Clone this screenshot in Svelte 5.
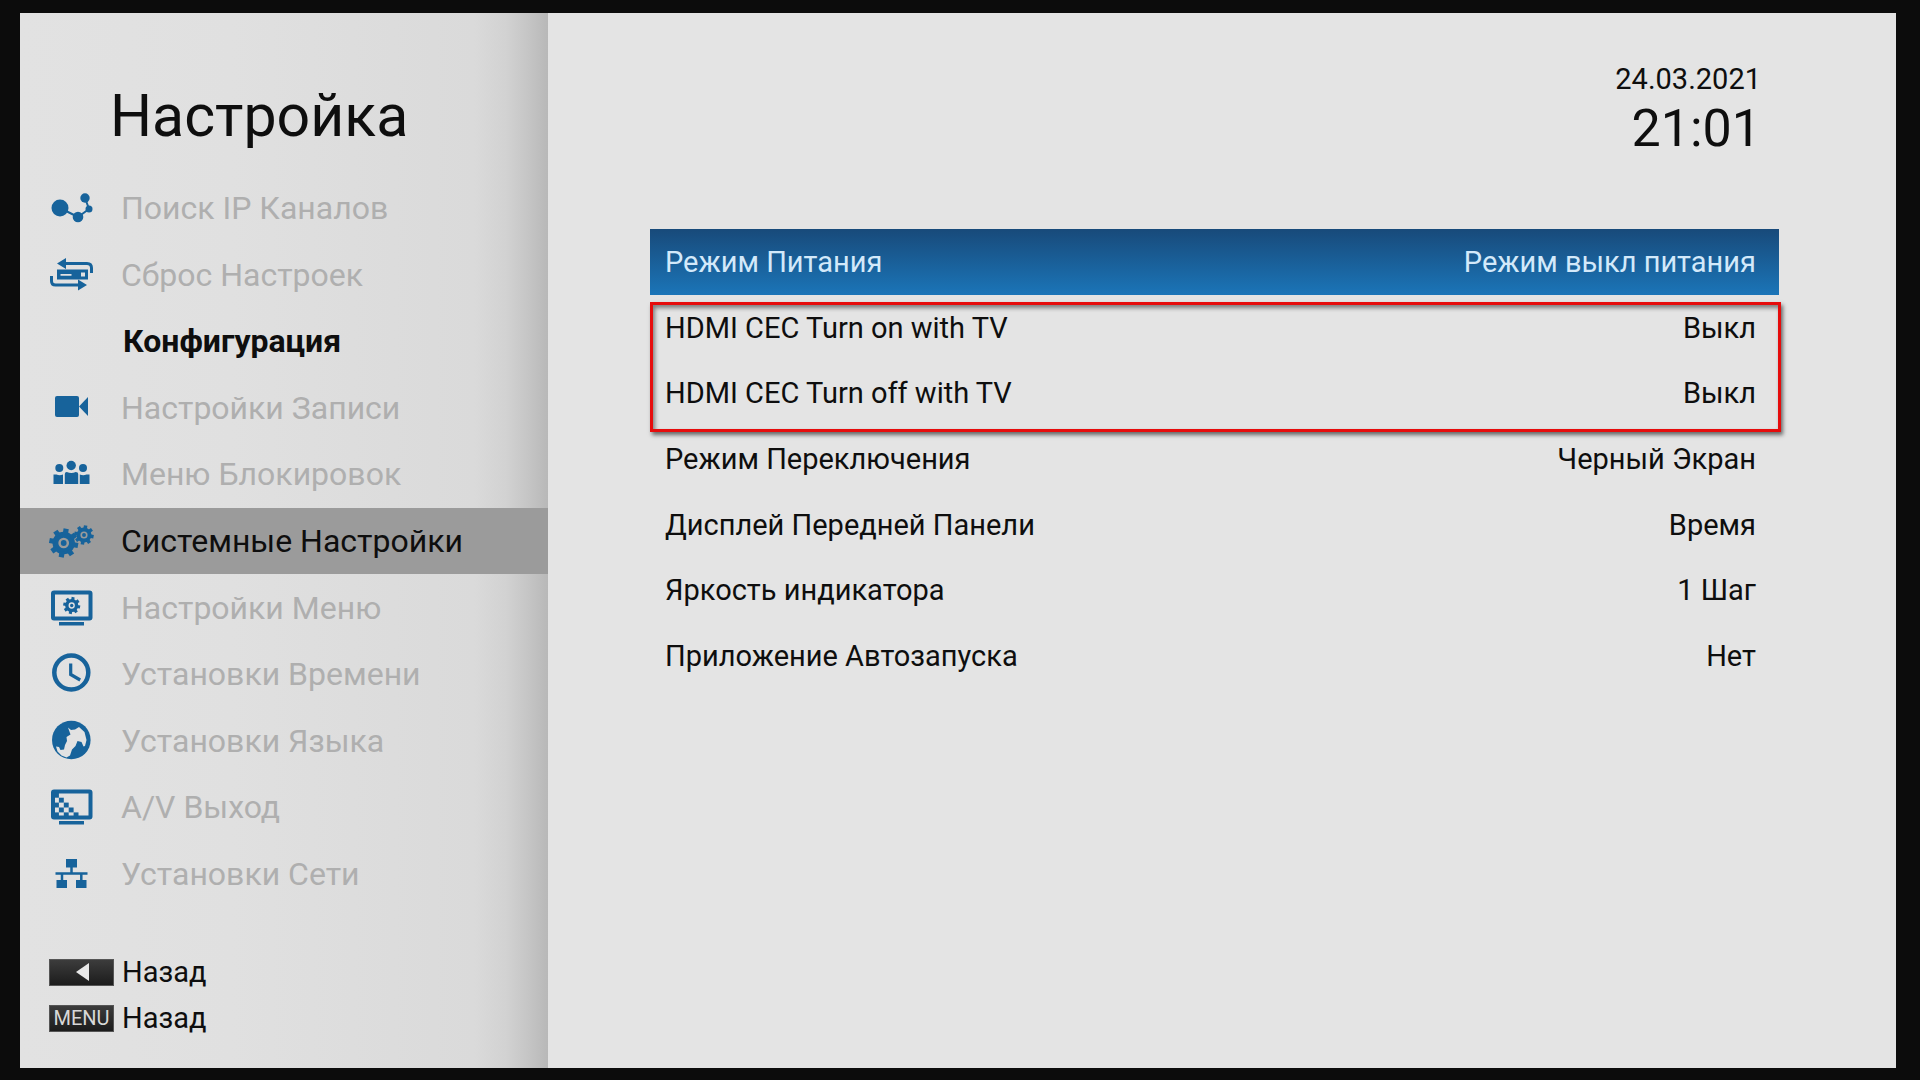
<script>
	const menu = [
		{ icon: "nodes", label: "Поиск IP Каналов" },
		{ icon: "reset", label: "Сброс Настроек" },
		{ heading: true, label: "Конфигурация" },
		{ icon: "camera", label: "Настройки Записи" },
		{ icon: "people", label: "Меню Блокировок" },
		{ icon: "gears", label: "Системные Настройки" },
		{ icon: "display", label: "Настройки Меню" },
		{ icon: "clock", label: "Установки Времени" },
		{ icon: "globe", label: "Установки Языка" },
		{ icon: "video", label: "A/V Выход" },
		{ icon: "network", label: "Установки Сети" }
	];

	const power = { label: "Режим Питания", value: "Режим выкл питания" };

	const cec = [
		{ label: "HDMI CEC Turn on with TV", value: "Выкл" },
		{ label: "HDMI CEC Turn off with TV", value: "Выкл" }
	];

	const others = [
		{ label: "Режим Переключения", value: "Черный Экран" },
		{ label: "Дисплей Передней Панели", value: "Время" },
		{ label: "Яркость индикатора", value: "1 Шаг" },
		{ label: "Приложение Автозапуска", value: "Нет" }
	];

	// column, row of the filled squares on the A/V icon
	const checks = [
		[0, 0], [1, 1], [0, 2], [2, 2], [1, 3], [3, 3], [0, 4], [2, 4], [4, 4]
	];

	const teeth = [0, 45, 90, 135, 180, 225, 270, 315];

	let current = "Системные Настройки";
	let selected = power.label;
</script>

{#snippet gear(cx, cy, r)}
	<g transform={`translate(${cx} ${cy}) scale(${r / 10})`}>
		<circle r="5.7" fill="none" stroke="currentColor" stroke-width="4" />
		{#each teeth as angle}
			<rect x="-1.8" y="-10" width="3.6" height="4" transform={`rotate(${angle + 10})`} />
		{/each}
		<circle r="2" />
	</g>
{/snippet}

{#snippet row(item)}
	<li>
		<button
			type="button"
			class="row"
			class:row-selected={item.label === selected}
			on:click={() => (selected = item.label)}
		>
			<span>{item.label}</span>
			<span>{item.value}</span>
		</button>
	</li>
{/snippet}

<div class="screen">
	<aside class="sidebar">
		<h1>Настройка</h1>

		<nav class="menu">
			{#each menu as item}
				{#if item.heading}
					<h2>{item.label}</h2>
				{:else}
					<button
						type="button"
						class="menu-item"
						class:menu-item-current={item.label === current}
						on:click={() => (current = item.label)}
					>
						<svg class="icon" viewBox="0 0 48 48" aria-hidden="true">
							{#if item.icon === "nodes"}
								<path class="line" stroke-width="2" d="M12 24l18 9 11-8-4-11" />
								<circle cx="12" cy="24" r="8.5" />
								<circle cx="30" cy="33" r="5.3" />
								<circle cx="41" cy="25" r="3.5" />
								<circle cx="37" cy="14" r="4.7" />
							{:else if item.icon === "reset"}
								<path class="line" stroke-width="3" d="M17 12.500h22q4.500 0 4.500 4.500V22M3.500 25v5q0 4 4 4H31" />
								<path d="M9 12.500l9-5.500v11zM39 34l-9-5.500v11z" />
								<path fill-rule="evenodd" d="M9 18.500h31v10H9zM12.500 23v1.800h11V23zM33 21.500v4h4v-4z" />
							{:else if item.icon === "camera"}
								<rect x="7" y="12" width="24" height="21" rx="2" />
								<path d="M31 22.500l9-9.500v19z" />
							{:else if item.icon === "people"}
								<circle cx="11.300" cy="18" r="4" />
								<circle cx="35" cy="18" r="4" />
								<circle cx="23.200" cy="15.500" r="4.700" />
								<path d="M5.500 34v-9.500h3q3 1.500 6.500 0V34zM16.800 34V24q0-2 2-2 4.500 2 8.900 0 2.500 0 2.500 2v10zM31.800 34v-9.500q3.500 1.500 6.700 0h3V34z" />
							{:else if item.icon === "gears"}
								{@render gear(15.7, 26, 14.5)}
								{@render gear(36, 18, 9.7)}
							{:else if item.icon === "display"}
								<rect class="line" x="5" y="8.500" width="37.500" height="26" rx="1" stroke-width="4" />
								<rect x="11" y="38" width="25" height="3.500" />
								{@render gear(23.7, 21.5, 8.5)}
							{:else if item.icon === "clock"}
								<circle class="line" cx="23.300" cy="22.500" r="17" stroke-width="4.500" />
								<path class="line" stroke-width="3.200" d="M22.700 13.500v11l9.500 5.500" />
							{:else if item.icon === "globe"}
								<circle cx="23.300" cy="23" r="19.300" />
								<path class="land" d="M20 10.500l3 2.500 4-.500 4-2.500 5.500 5 2 8-1.500 6-1.500.500-2-4.500-4-1-2 5-3.500 3.500-2 6-3.500 2-5-2-4-4-1.500-5 3 .500 1.500 3 3.500-.500 1-4.500 2-4-.500-4 4-2.500z" />
							{:else if item.icon === "video"}
								<rect class="line" x="5" y="8.500" width="37.500" height="26" rx="1" stroke-width="4" />
								{#each checks as [col, line]}
									<rect x={6 + col * 4.9} y={9.8 + line * 4.9} width="4.900" height="4.900" />
								{/each}
								<rect x="11" y="38" width="25" height="3.500" />
							{:else if item.icon === "network"}
								<path d="M18 9h11v8.500H18zM8.500 30H19v8H8.500zM28 30h10.500v8H28z" />
								<path class="line" stroke-width="2.500" d="M7.500 23.500h32M23.500 17v6M14 23v8M33.300 23v8" />
							{/if}
						</svg>
						<span>{item.label}</span>
					</button>
				{/if}
			{/each}
		</nav>

		<footer class="hints">
			<button type="button" class="hint">
				<kbd>
					<svg viewBox="0 0 16 20" aria-hidden="true"><path d="M15 1v18L2 10z" /></svg>
				</kbd>
				<span>Назад</span>
			</button>
			<button type="button" class="hint">
				<kbd>MENU</kbd>
				<span>Назад</span>
			</button>
		</footer>
	</aside>

	<main class="content">
		<header class="datetime">
			<time class="date" datetime="2021-03-24">24.03.2021</time>
			<time class="clock" datetime="21:01">21:01</time>
		</header>

		<ul class="settings">
			{@render row(power)}
			<li class="group">
				<ul>
					{#each cec as item}
						{@render row(item)}
					{/each}
				</ul>
			</li>
			{#each others as item}
				{@render row(item)}
			{/each}
		</ul>
	</main>
</div>

<style>
	:global(body) {
		background: #0c0c0c;
	}

	.screen {
		display: grid;
		grid-template-columns: 528px minmax(0, 1fr);
		min-height: 100vh;
		box-sizing: border-box;
		border: solid #0c0c0c;
		border-width: 13px 24px 12px 20px;
		background: #e4e4e4;
		color: #0e0e0e;
		font-family: Roboto, "Liberation Sans", sans-serif;
	}

	button {
		margin: 0;
		padding: 0;
		border: 0;
		background: none;
		color: inherit;
		font: inherit;
		text-align: left;
		cursor: pointer;
	}

	ul {
		margin: 0;
		padding: 0;
		list-style: none;
	}

	.sidebar {
		display: flex;
		flex-direction: column;
		background: linear-gradient(90deg, #e2e2e2 0, #e0e0e0 40%, #dadada 86%, #d2d2d2 92%, #c6c6c6 96%, #b8b8b8 100%);
	}

	h1 {
		margin: 0;
		padding: 64px 0 20px 90px;
		font-size: 59px;
		font-weight: 400;
		line-height: 78px;
	}

	.menu {
		display: grid;
		grid-auto-rows: 1fr;
		height: 732px;
		font-size: 32px;
	}

	h2 {
		display: flex;
		align-items: center;
		margin: 0;
		padding-left: 103px;
		font-size: inherit;
		font-weight: 700;
	}

	.menu-item {
		display: flex;
		align-items: center;
		gap: 25px;
		padding-left: 28px;
		color: #afafaf;
	}

	.menu-item-current {
		background: #9b9b9b;
		color: #0e0e0e;
	}

	.icon {
		flex: none;
		width: 48px;
		height: 48px;
		color: #17639b;
		fill: currentColor;
	}

	.line {
		fill: none;
		stroke: currentColor;
	}

	.land {
		fill: #e2e2e2;
	}

	.hints {
		display: flex;
		flex-direction: column;
		padding: 42px 29px 20px;
	}

	.hint {
		display: flex;
		align-items: center;
		gap: 8px;
		font-size: 29px;
		line-height: 46px;
	}

	kbd {
		display: flex;
		align-items: center;
		justify-content: center;
		width: 65px;
		height: 27px;
		box-sizing: border-box;
		border: 1px solid #555;
		background: linear-gradient(#3c3c3c, #1c1c1c);
		color: #d8d8d8;
		font-family: inherit;
		font-size: 20px;
		line-height: 25px;
	}

	kbd svg {
		width: 16px;
		height: 20px;
		fill: #e8e8e8;
	}

	.content {
		padding: 48px 117px 48px 102px;
	}

	.datetime {
		display: flex;
		flex-direction: column;
		align-items: flex-end;
		padding: 0 18px 68px 0;
	}

	.date {
		font-size: 29px;
		line-height: 36px;
	}

	.clock {
		font-size: 52px;
		line-height: 64px;
	}

	.settings {
		display: grid;
		grid-auto-rows: 1fr;
		height: 460px;
		font-size: 29px;
	}

	.row {
		display: flex;
		align-items: center;
		justify-content: space-between;
		width: 100%;
		height: 100%;
		padding: 0 23px 0 15px;
	}

	.row-selected {
		background: linear-gradient(#184a7a, #1b75b8);
		color: #d3e9fa;
	}

	.group {
		position: relative;
		grid-row: span 2;
	}

	.group ul {
		display: grid;
		grid-auto-rows: 1fr;
		height: 100%;
	}

	.group::after {
		content: "";
		position: absolute;
		inset: 7px -2px -6px 0;
		border: 3px solid #e60c0c;
		box-shadow: 2px 3px 4px rgba(0, 0, 0, 0.55), inset 2px 3px 4px rgba(0, 0, 0, 0.45);
		pointer-events: none;
	}
</style>
